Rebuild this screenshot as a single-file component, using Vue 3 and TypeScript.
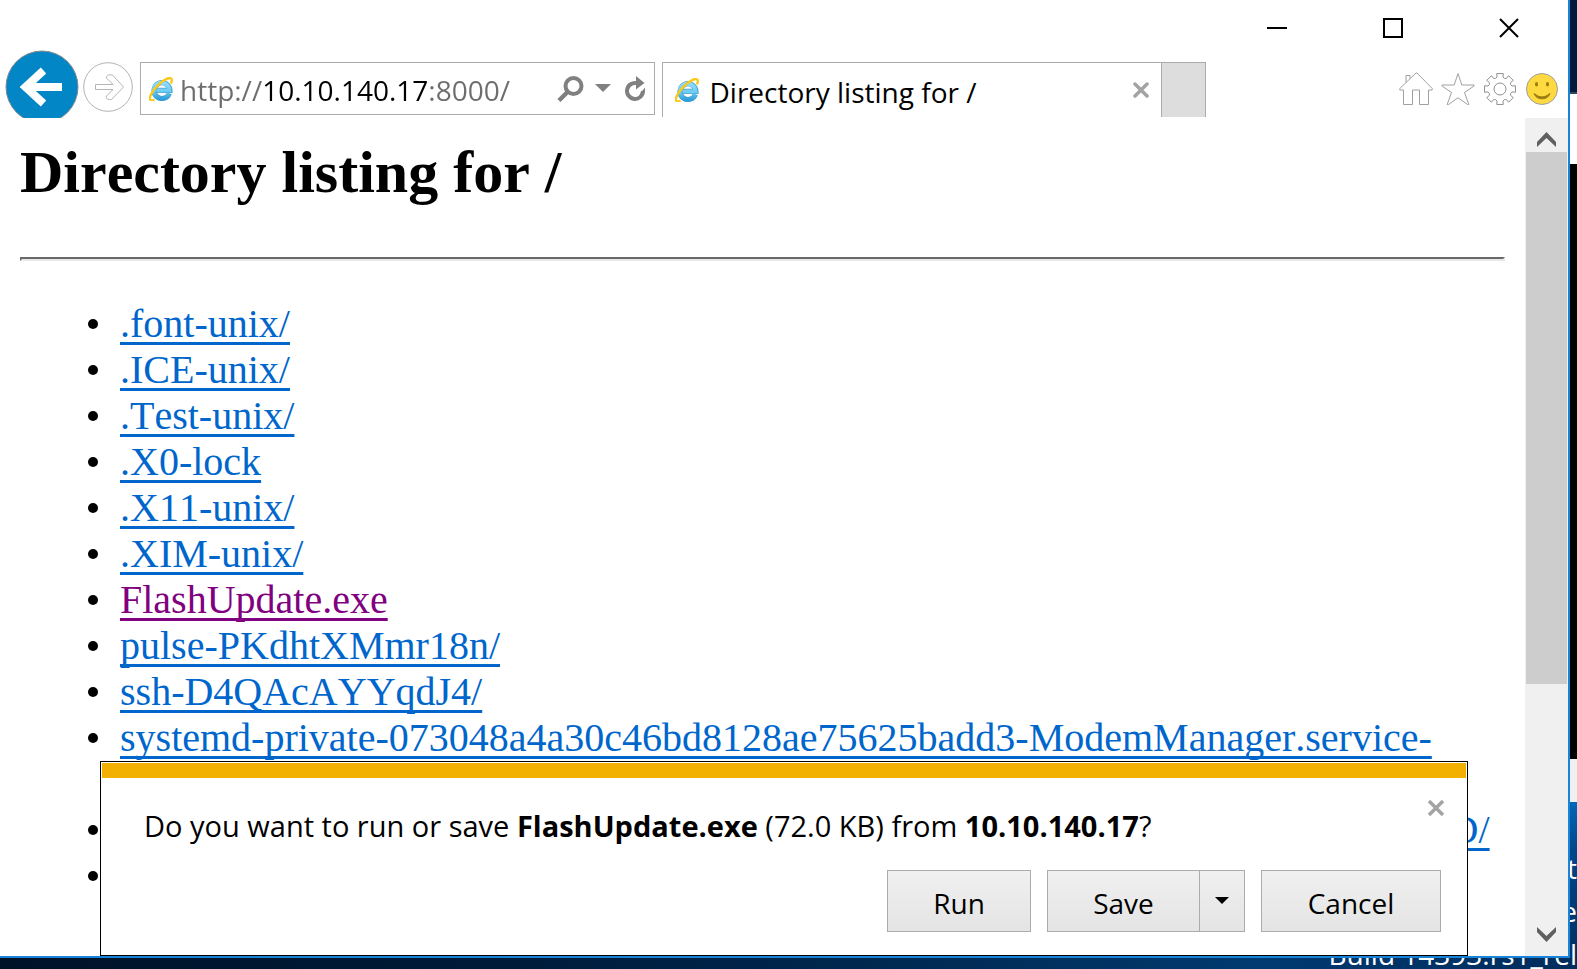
<script setup lang="ts">
import { ref } from 'vue'

interface Entry {
  name: string
  visited?: boolean
}

const address = ref('http://10.10.140.17:8000/')
const pageTitle = 'Directory listing for /'

const entries: Entry[] = [
  { name: '.font-unix/' },
  { name: '.ICE-unix/' },
  { name: '.Test-unix/' },
  { name: '.X0-lock' },
  { name: '.X11-unix/' },
  { name: '.XIM-unix/' },
  { name: 'FlashUpdate.exe', visited: true },
  { name: 'pulse-PKdhtXMmr18n/' },
  { name: 'ssh-D4QAcAYYqdJ4/' },
  { name: 'systemd-private-073048a4a30c46bd8128ae75625badd3-ModemManager.service-jW4kQe/' },
  { name: 'systemd-private-073048a4a30c46bd8128ae75625badd3-rtkit-daemon.service-rJ1teD/' },
  { name: 'VMwareDnD/' },
]

const watermark = ['Windows Server 2016 St', 'Windows License valid for the', 'Build 14393.rs1_rel']

// Outline of an eight-tooth cog centred on 17,17
function cogPath(): string {
  const point = (radius: number, angle: number) =>
    `${(17 + radius * Math.cos(angle)).toFixed(2)} ${(17 + radius * Math.sin(angle)).toFixed(2)}`
  let d = ''
  for (let i = 0; i < 8; i++) {
    const a = (i * Math.PI) / 4
    d += `${i ? 'L' : 'M'}${point(12.4, a - 0.24)}L${point(15.8, a - 0.21)}L${point(15.8, a + 0.21)}L${point(12.4, a + 0.24)}`
    d += `Q${point(10.8, a + Math.PI / 8)} ${point(12.4, a + Math.PI / 4 - 0.24)}`
  }
  return d + 'Z'
}
const cog = cogPath()
</script>

<template>
  <div class="desktop">
    <div class="behind" aria-hidden="true">
      <div class="behind-top"></div>
      <div class="behind-page"></div>
      <div class="behind-console"></div>
      <div class="behind-bar"></div>
    </div>
    <div class="watermark">
      <p v-for="line in watermark" :key="line">{{ line }}</p>
    </div>

    <svg class="defs" aria-hidden="true">
      <defs>
        <linearGradient id="ie-blue" x1="0" y1="0" x2="0" y2="1">
          <stop offset="0" stop-color="#8ddcfa" />
          <stop offset="0.55" stop-color="#6accf3" />
          <stop offset="1" stop-color="#2f9fdb" />
        </linearGradient>
        <symbol id="ie-logo" viewBox="0 0 24 24">
          <path d="M20.400 16.400A7.900 7.900 0 1 1 20.900 13.400H8" fill="none" stroke="#4a9dcc" stroke-width="5.200" />
          <path d="M20.100 16.300A7.900 7.900 0 1 1 20.500 13.400H8" fill="none" stroke="url(#ie-blue)" stroke-width="4" />
          <path
            d="M4.600 23C1 24.600-.2 21.800 2.100 17.300 5 11.400 11.800 4.600 17.600 1.900 21.900-.2 23.700 1.400 22.300 5.500"
            fill="none" stroke="#fcc81a" stroke-width="2.400" stroke-linecap="round"
          />
        </symbol>
      </defs>
    </svg>

    <main class="window">
      <header class="title-bar">
        <button class="caption" aria-label="Minimize">
          <svg width="22" height="22" viewBox="0 0 22 22"><path d="M1 11H21" stroke="#000" stroke-width="2" /></svg>
        </button>
        <button class="caption" aria-label="Maximize">
          <svg width="22" height="22" viewBox="0 0 22 22"><path d="M2 2H20V20H2Z" fill="none" stroke="#000" stroke-width="2" /></svg>
        </button>
        <button class="caption" aria-label="Close">
          <svg width="22" height="22" viewBox="0 0 22 22"><path d="M2 2L20 20M20 2L2 20" stroke="#000" stroke-width="2" /></svg>
        </button>
      </header>

      <nav class="toolbar">
        <button class="back" aria-label="Back">
          <svg width="74" height="74" viewBox="0 0 74 74">
            <circle cx="37" cy="37" r="36" fill="#0386c6" stroke="#85898c" />
            <path d="M57 37H21M38.500 20.500L20.500 37L38.500 53.500" fill="none" stroke="#fff" stroke-width="8" stroke-miterlimit="10" />
          </svg>
        </button>
        <button class="forward" aria-label="Forward">
          <svg width="50" height="50" viewBox="0 0 50 50">
            <circle cx="25" cy="25" r="24.300" fill="#fff" stroke="#b2b2b2" />
            <path
              d="M12.500 22.500V27.500H30L23.500 34Q22 37 26.500 37.500H28.500L40.500 25L29.500 13Q23 12 23.500 16L30 22.500Z"
              fill="#fff" stroke="#b5b5b5"
            />
          </svg>
        </button>

        <div class="address">
          <svg class="ie" width="24" height="24"><use href="#ie-logo" /></svg>
          <input v-model="address" class="url" type="text" aria-label="Address" spellcheck="false" />
          <button class="tool search" aria-label="Search">
            <svg width="28" height="28" viewBox="0 0 28 28">
              <circle cx="16.500" cy="11" r="8" fill="none" stroke="#808080" stroke-width="4" />
              <path d="M11 16.500L2 25.500" stroke="#808080" stroke-width="4.500" />
            </svg>
          </button>
          <button class="tool arrow" aria-label="Show address list">
            <svg width="16" height="9" viewBox="0 0 16 9"><path d="M0 0H16L8 8Z" fill="#808080" /></svg>
          </button>
          <button class="tool refresh" aria-label="Refresh">
            <svg width="22" height="26" viewBox="0 0 22 26">
              <path d="M12 7.200A8 8 0 1 0 18 15" fill="none" stroke="#808080" stroke-width="4" />
              <path d="M11 0L19.500 7L11 13.500Z" fill="#808080" />
              <path d="M20 11.500V16L15 17.500Z" fill="#808080" />
            </svg>
          </button>
        </div>

        <div class="tab">
          <button class="tab-label">
            <svg class="ie" width="24" height="24"><use href="#ie-logo" /></svg>
            <span>{{ pageTitle }}</span>
          </button>
          <button class="cross" aria-label="Close tab">
            <svg width="16" height="16" viewBox="0 0 16 16"><path d="M2 2L14 14M14 2L2 14" stroke="#a3a3a3" stroke-width="3.500" stroke-linecap="round" /></svg>
          </button>
        </div>
        <button class="new-tab" aria-label="New tab"></button>

        <div class="commands">
          <button aria-label="Home">
            <svg width="34" height="34" viewBox="0 0 34 34">
              <path
                d="M17 1L0.800 16.500V18H4.500V32.500H13.500V18H20.500V32.500H29.500V18H33.200V16.500L18 1ZM7 10.500V3.500H11V6.500"
                fill="#fff" stroke="#a0a0a0"
              />
            </svg>
          </button>
          <button aria-label="Favorites">
            <svg width="34" height="34" viewBox="0 0 34 34">
              <path d="M17 1.500L20.800 13H33V14L23.500 20.500L27.800 32.500H26.500L17 25.800L7.500 32.500H6.200L10.500 20.500L1 14V13H13.200Z" fill="#fff" stroke="#a0a0a0" />
            </svg>
          </button>
          <button aria-label="Tools">
            <svg width="34" height="34" viewBox="0 0 34 34">
              <path :d="cog" fill="#fff" stroke="#909090" />
              <circle cx="17" cy="17" r="6" fill="none" stroke="#909090" />
            </svg>
          </button>
          <button aria-label="Send a smile">
            <svg width="34" height="34" viewBox="0 0 34 34">
              <circle cx="17" cy="17" r="15.500" fill="#ffd940" stroke="#a0a0a0" />
              <ellipse cx="11.500" cy="12.300" rx="1.500" ry="2.300" fill="#9a7d12" />
              <ellipse cx="22.500" cy="12.300" rx="1.500" ry="2.300" fill="#9a7d12" />
              <path d="M9 21.500Q17 28.500 25 21.500Q23 26.800 17 26.800Q11 26.800 9 21.500Z" fill="#9a7d12" stroke="#9a7d12" />
            </svg>
          </button>
        </div>
      </nav>

      <div class="view">
        <article class="document">
          <h2>{{ pageTitle }}</h2>
          <hr />
          <ul>
            <li v-for="entry in entries" :key="entry.name">
              <a :class="{ visited: entry.visited }" href="#">{{ entry.name }}</a>
            </li>
          </ul>
        </article>

        <div class="scrollbar">
          <button aria-label="Scroll up">
            <svg width="19" height="15" viewBox="0 0 19 15"><path d="M0 10L9.500 0L19 10V15L9.500 6L0 15Z" fill="#606060" /></svg>
          </button>
          <div class="track"><div class="thumb"></div></div>
          <button class="down" aria-label="Scroll down">
            <svg width="19" height="15" viewBox="0 0 19 15"><path d="M0 5L9.500 15L19 5V0L9.500 9L0 0Z" fill="#606060" /></svg>
          </button>
        </div>

        <section class="download" role="dialog" aria-label="Download">
          <div class="stripe"></div>
          <div class="prompt">
            <p>Do you want to run or save <b>FlashUpdate.exe</b> (72.0 KB) from <b>10.10.140.17</b>?</p>
            <button class="cross" aria-label="Dismiss">
              <svg width="16" height="16" viewBox="0 0 16 16"><path d="M1 1L15 15M15 1L1 15" stroke="#a3a3a3" stroke-width="3.500" /></svg>
            </button>
          </div>
          <div class="actions">
            <button class="push run">Run</button>
            <div class="split">
              <button class="push save">Save</button>
              <button class="push more" aria-label="More save options">
                <svg width="14" height="8" viewBox="0 0 14 8"><path d="M0 0H14L7 7Z" fill="#000" /></svg>
              </button>
            </div>
            <button class="push cancel">Cancel</button>
          </div>
        </section>
      </div>
    </main>
  </div>
</template>

<style>
html,
body {
  margin: 0;
  overflow: hidden;
}
</style>

<style scoped>
* {
  box-sizing: border-box;
}
.desktop {
  position: relative;
  display: flex;
  height: 100vh;
  padding: 0 7px 11px 0;
  overflow: hidden;
  background: linear-gradient(90deg, #001228 0%, #001a38 30%, #00284f 55%, #003a70 80%, #002d5c 100%);
  font-family: "Open Sans", "Noto Sans", sans-serif;
  font-size: 28px;
  font-kerning: none;
  color: #000;
}
button {
  display: flex;
  align-items: center;
  justify-content: center;
  padding: 0;
  border: 0;
  background: none;
  font: inherit;
  color: inherit;
}
svg {
  display: block;
  flex: none;
}
.defs {
  position: absolute;
  width: 0;
  height: 0;
}

.behind {
  position: absolute;
  inset: 0 0 11px auto;
  width: 7px;
  display: flex;
  flex-direction: column;
  background: linear-gradient(#0067b8 802px, #00478a 850px, #002f63);
}
.behind-top {
  height: 94px;
  border-bottom: 2px solid #33475c;
  background: #001b3a;
}
.behind-page {
  height: 70px;
  background: #fff;
}
.behind-console {
  height: 595px;
  background: #000;
}
.behind-bar {
  height: 43px;
  background: #f0f0f0;
}
.watermark {
  position: absolute;
  right: 0;
  bottom: -7px;
  line-height: 43px;
  text-align: right;
  white-space: nowrap;
  color: #fff;
}
.watermark p {
  margin: 0;
}

.window {
  position: relative;
  display: flex;
  flex: 1;
  flex-direction: column;
  min-width: 0;
  border: solid #1883d7;
  border-width: 0 2px 2px 0;
  background: #fff;
}
.title-bar {
  display: flex;
  justify-content: flex-end;
  height: 50px;
  padding-right: 1px;
}
.caption {
  width: 116px;
  height: 56px;
}

.toolbar {
  display: flex;
  align-items: flex-start;
  height: 68px;
  padding: 0 9px 0 5px;
}
.back {
  align-items: flex-start;
  width: 74px;
  height: 68px;
  overflow: hidden;
}
.forward {
  margin: 12px 7px 0 4px;
}
.address {
  display: flex;
  flex: 519;
  align-items: center;
  min-width: 0;
  height: 53px;
  margin-top: 12px;
  padding: 0 7px 0 8px;
  border: 1px solid #ababab;
}
.url {
  flex: 1;
  min-width: 0;
  height: 50px;
  margin-left: 7px;
  padding: 2px 0 0;
  border: 0;
  outline: 0;
  background: linear-gradient(90deg, #6d6d6d 84px, #000 84px 249px, #6d6d6d 249px);
  background-clip: text;
  font: inherit;
  font-kerning: none;
  color: transparent;
}
.arrow {
  margin: 0 14px 0 10px;
}
.tab {
  display: flex;
  flex: 495;
  align-items: center;
  min-width: 0;
  height: 55px;
  margin: 12px 0 0 7px;
  padding: 0 12px;
  border: solid #ababab;
  border-width: 1px 0 0 1px;
}
.tab-label {
  flex: 1;
  justify-content: flex-start;
  gap: 11px;
  white-space: nowrap;
}
.tab-label span {
  margin-top: 4px;
}
.new-tab {
  width: 45px;
  height: 55px;
  margin-top: 12px;
  border: solid #ababab;
  border-width: 1px 1px 0;
  background: #ddd;
}
.commands {
  display: flex;
  gap: 8px;
  margin: 22px 0 0 193px;
}

.view {
  position: relative;
  display: flex;
  flex: 1;
  min-height: 0;
}
.document {
  flex: 1;
  min-width: 0;
  padding: 20px;
  overflow: hidden;
  font-family: "Liberation Serif", serif;
  font-size: 40px;
  line-height: 46px;
}
h2 {
  margin: 0;
  font-size: 60px;
  line-height: 69px;
}
hr {
  margin: 50px 0 40px;
  border: 2px solid;
  border-color: #696969 #e8e8e8 #e8e8e8 #696969;
}
ul {
  margin: 0;
  padding-left: 100px;
  list-style: none;
}
li {
  position: relative;
}
li::before {
  content: "";
  position: absolute;
  top: 18px;
  left: -32px;
  width: 10px;
  height: 10px;
  border-radius: 50%;
  background: #000;
}
a {
  color: #06c;
  text-decoration: underline 3px;
  text-decoration-skip-ink: none;
  text-underline-offset: 5px;
}
a.visited {
  color: purple;
}

.scrollbar {
  display: flex;
  flex-direction: column;
  width: 43px;
  padding: 0 1px;
  background: #f0f0f0;
}
.scrollbar button {
  height: 34px;
  padding-top: 8px;
}
.scrollbar .down {
  height: 44px;
  padding: 0;
}
.track {
  flex: 1;
}
.thumb {
  height: 70%;
  background: #cdcdcd;
}

.download {
  position: absolute;
  right: 100px;
  bottom: 0;
  left: 100px;
  padding: 1px 1px 23px;
  border: 1px solid #000;
  background: #fff;
}
.stripe {
  height: 15px;
  background: #f2b100;
}
.prompt {
  display: flex;
  align-items: flex-start;
  justify-content: space-between;
  height: 92px;
  padding: 22px 22px 0 42px;
}
.prompt p {
  margin: 6px 0 0;
  font-size: 29px;
  line-height: 40px;
}
.actions {
  display: flex;
  justify-content: flex-end;
  gap: 16px;
  padding-right: 25px;
}
.push {
  height: 62px;
  padding-top: 4px;
  border: 1px solid #acacac;
  background: linear-gradient(#f0f0f0, #e4e4e4);
}
.run {
  width: 144px;
}
.split {
  display: flex;
}
.save {
  width: 152px;
  border-right: 0;
}
.more {
  width: 46px;
  padding: 0;
}
.cancel {
  width: 180px;
}
</style>
